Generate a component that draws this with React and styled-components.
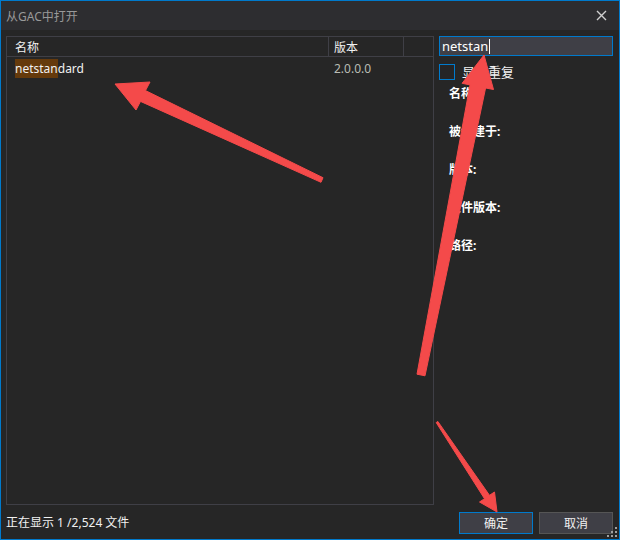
import React from 'react'
import styled, { createGlobalStyle } from 'styled-components'

const GlobalStyle = createGlobalStyle`
  html, body {
    margin: 0;
    padding: 0;
    background: #252526;
  }
  * {
    box-sizing: border-box;
  }
`

const Window = styled.div`
  position: relative;
  width: 620px;
  height: 540px;
  border: 1px solid #007acc;
  background: #262626;
  display: flex;
  flex-direction: column;
  font-family: "Noto Sans", "Noto Sans CJK SC", sans-serif;
  font-size: 12px;
  color: #f1f1f1;
  overflow: hidden;
`

const TitleBar = styled.div`
  height: 29px;
  flex: none;
  background: #2d2d30;
  display: flex;
  align-items: center;
  justify-content: space-between;
  padding: 0 10px 0 5px;
`

const Title = styled.span`
  color: #999999;
  font-size: 12px;
`

const CloseButton = styled.button`
  width: 16px;
  height: 16px;
  padding: 0;
  border: none;
  background: none;
  display: flex;
  align-items: center;
  justify-content: center;
`

const Body = styled.div`
  flex: 1;
  display: grid;
  grid-template-columns: 428px 174px;
  column-gap: 5px;
  padding: 6px 0 0 5px;
  min-height: 0;
`

const List = styled.div`
  border: 1px solid #3f3f46;
  display: flex;
  flex-direction: column;
`

const HeaderRow = styled.div`
  display: grid;
  grid-template-columns: 322px 75px 1fr;
  height: 20px;
  border-bottom: 1px solid #3f3f46;
`

const HeaderCell = styled.div`
  display: flex;
  align-items: center;
  padding-left: ${p => p.$pad}px;
  border-right: ${p => (p.$last ? 'none' : '1px solid #3f3f46')};
  color: #f1f1f1;
`

const Row = styled.div`
  display: grid;
  grid-template-columns: 322px 75px 1fr;
  height: 22px;
  align-items: center;
`

const Cell = styled.div`
  padding-left: ${p => p.$pad}px;
  color: ${p => p.$dim ? '#b9bdb4' : '#f1f1f1'};
`

const Match = styled.span`
  background: #653a0c;
  padding: 1px 0;
`

const Side = styled.div`
  display: flex;
  flex-direction: column;
`

const SearchBox = styled.div`
  height: 20px;
  border: 1px solid #007acc;
  background: #3f3f46;
  display: flex;
  align-items: center;
  padding-left: 2px;
  font-size: 13px;
  color: #ffffff;
`

const Caret = styled.span`
  display: inline-block;
  width: 1px;
  height: 15px;
  background: #ffffff;
  margin-left: 1px;
`

const CheckRow = styled.label`
  display: flex;
  align-items: center;
  gap: 7px;
  margin-top: 6px;
  font-size: 13px;
`

const CheckBox = styled.span`
  width: 16px;
  height: 16px;
  border: 1px solid #007acc;
  background: #252526;
`

const Details = styled.div`
  display: flex;
  flex-direction: column;
  gap: 21px;
  padding: 3px 0 0 10px;
`

const DetailLabel = styled.div`
  font-weight: bold;
  font-size: 12px;
  height: 17px;
  color: #ffffff;
`

const Footer = styled.div`
  flex: none;
  height: 34px;
  display: flex;
  align-items: center;
  padding: 0 6px 0 5px;
`

const Status = styled.span`
  flex: 1;
  font-size: 12px;
  color: #f1f1f1;
  margin-top: -1px;
`

const Button = styled.button`
  width: 74px;
  height: 22px;
  margin-left: 6px;
  margin-top: 2px;
  border: 1px solid ${p => (p.$primary ? '#007acc' : '#555555')};
  background: #3f3f46;
  color: #f1f1f1;
  font-family: inherit;
  font-size: 12px;
  padding: 0;
`

const Grip = styled.svg`
  position: absolute;
  right: 1px;
  bottom: 1px;
`

const Annotations = styled.svg`
  position: absolute;
  left: -1px;
  top: -1px;
  pointer-events: none;
`

const details = ['名称:', '被创建于:', '版本:', '文件版本:', '路径:']

const arrows = [
  '115,84 150,82 145.5,90.6 323,177.7 321,182.3 140.5,101.4 136,110',
  '484,55 493.5,89.5 485.6,88 425,375.8 417,374.2 470,84.9 462.1,83.3',
  '497,512 479.5,502 484.5,498.7 436.2,422.6 437.8,421.4 489.5,495.3 494.5,492',
]

export default function App() {
  return (
    <>
      <GlobalStyle />
      <Window>
        <TitleBar>
          <Title>从GAC中打开</Title>
          <CloseButton aria-label="关闭">
            <svg width="11" height="11" viewBox="0 0 11 11">
              <path d="M1 1 L10 10 M10 1 L1 10" stroke="#d0d0d0" strokeWidth="1.4" />
            </svg>
          </CloseButton>
        </TitleBar>
        <Body>
          <List>
            <HeaderRow>
              <HeaderCell $pad={8}>名称</HeaderCell>
              <HeaderCell $pad={5}>版本</HeaderCell>
              <HeaderCell $last />
            </HeaderRow>
            <Row>
              <Cell $pad={8}><Match>netstan</Match>dard</Cell>
              <Cell $pad={5} $dim>2.0.0.0</Cell>
              <Cell />
            </Row>
          </List>
          <Side>
            <SearchBox>netstan<Caret /></SearchBox>
            <CheckRow>
              <CheckBox />
              显示重复
            </CheckRow>
            <Details>
              {details.map(d => (
                <DetailLabel key={d}>{d}</DetailLabel>
              ))}
            </Details>
          </Side>
        </Body>
        <Footer>
          <Status>正在显示 1 /2,524 文件</Status>
          <Button $primary>确定</Button>
          <Button>取消</Button>
        </Footer>
        <Grip width="12" height="12" viewBox="0 0 12 12">
          {[[8, 0], [8, 4], [4, 4], [8, 8], [4, 8], [0, 8]].map(([x, y]) => (
            <rect key={`${x}-${y}`} x={x + 1} y={y + 1} width="2" height="2" fill="#a0a0a0" />
          ))}
        </Grip>
        <Annotations width="620" height="540" viewBox="0 0 620 540">
          {arrows.map(points => (
            <polygon key={points} points={points} fill="#f44a4a" strokeLinejoin="round" stroke="#f44a4a" strokeWidth="1" />
          ))}
        </Annotations>
      </Window>
    </>
  )
}
